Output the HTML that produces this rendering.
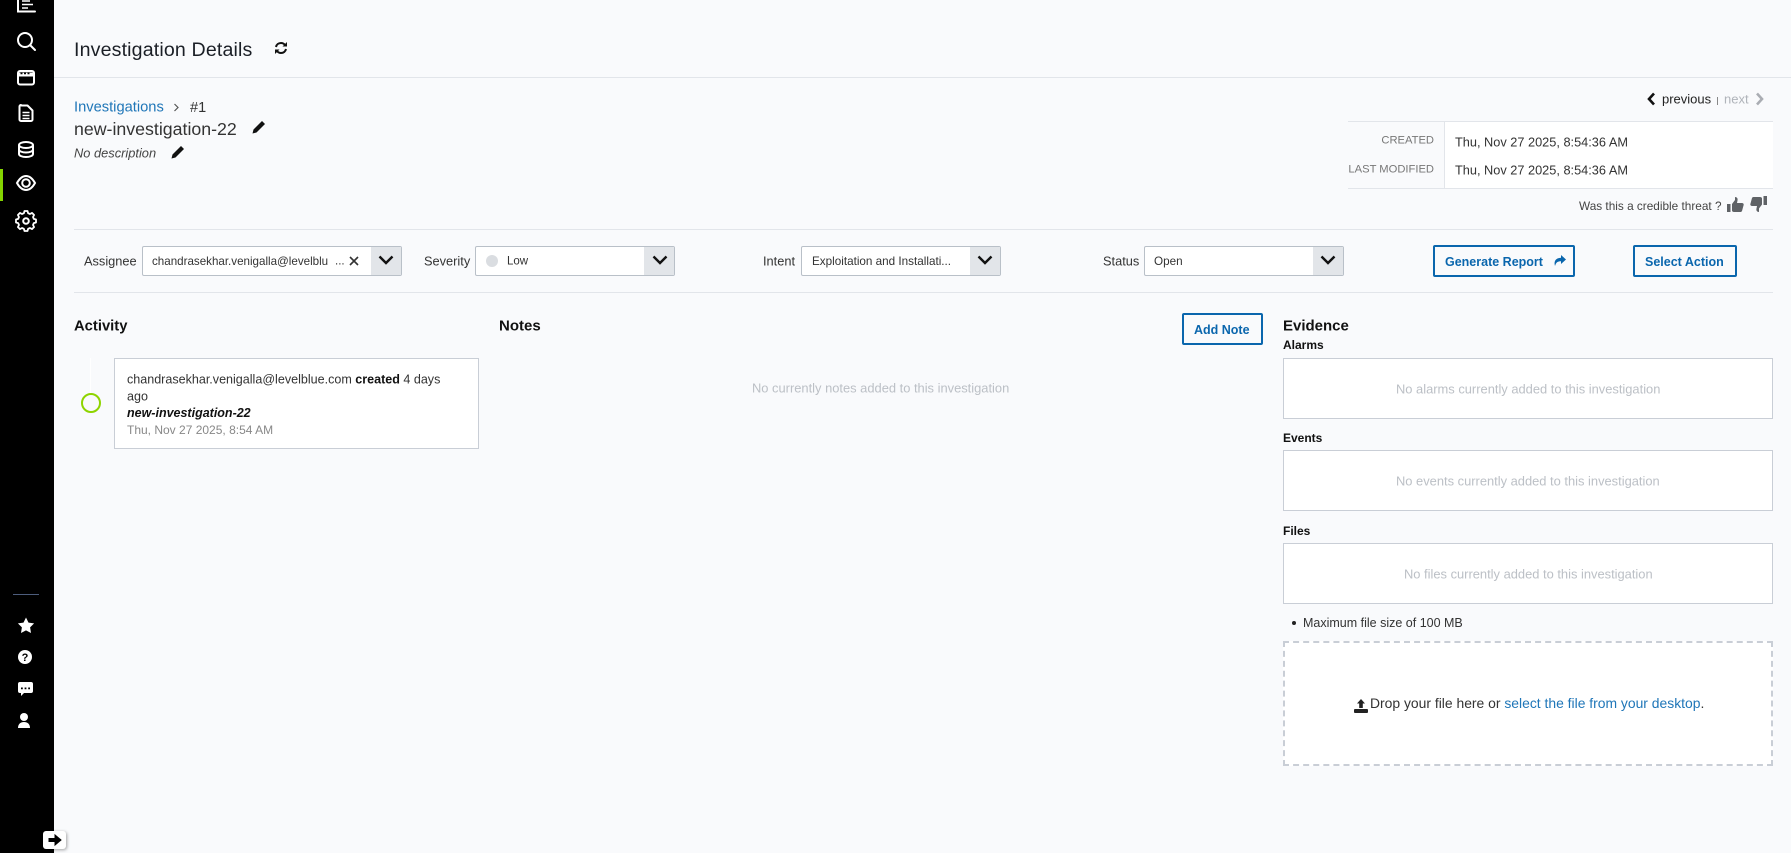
<!DOCTYPE html>
<html lang="en"><head><meta charset="utf-8"><title>Investigation Details</title>
<style>
html,body{margin:0;padding:0;width:1791px;height:853px;overflow:hidden;background:#f9fafc;font-family:"Liberation Sans",sans-serif;color:#222}
#app{position:relative;width:1791px;height:853px;overflow:hidden}
.t{position:absolute;white-space:nowrap;line-height:1;transform:translateY(-50%)}
.b{position:absolute;box-sizing:border-box}
svg{position:absolute;display:block}
.hr{position:absolute;height:1px;background:#e2e5ea}
.box{position:absolute;box-sizing:border-box;background:#fff;border:1px solid #c9ced6}
.sel{position:absolute;box-sizing:border-box;background:#fff;border:1px solid #b9c0c8;border-radius:2px;top:246px;height:30px}
.sel i{position:absolute;right:0;top:0;bottom:0;width:30px;background:#e2e5e9}
.btn{position:absolute;box-sizing:border-box;border:2px solid #0a66ad;border-radius:2px;color:#0a66ad;font-weight:bold;font-size:12.5px;background:#f9fafc}
.ph{color:#bcc0c6;font-size:12.9px}
.lb{font-size:12.8px;color:#333}
a{color:#1f76b8;text-decoration:none}
</style></head><body><div id="app">

<div class="b" style="left:0;top:0;width:54px;height:853px;background:#000"></div>
<div class="b" style="left:0;top:169px;width:3px;height:32px;background:#84d400"></div>
<svg style="left:0;top:0" width="54" height="240" viewBox="0 0 54 240" fill="none" stroke="#fff" stroke-width="2">
<path d="M18 0V11.500H35" stroke-linecap="round"/><path d="M22 1H30M22 4.500H33M22 8H28" stroke-width="1.600"/>
<circle cx="25" cy="40" r="7"/><path d="M30.500 45.500L35 50" stroke-linecap="round"/>
<rect x="18" y="71" width="16" height="13.500" rx="2"/><path d="M18 74.500H34" stroke-width="4"/><path d="M20.500 73.500H22.500M24 73.500H26M27.500 73.500H29.500" stroke="#000" stroke-width="1.400"/>
<path d="M21 105.500h6.500l5 5v9a1.500 1.500 0 0 1-1.500 1.500H21a1.500 1.500 0 0 1-1.500-1.500v-13a1.500 1.500 0 0 1 1.500-1.500z" stroke-linejoin="round"/><path d="M22.500 112.500H29.500M22.500 115.500H29.500M22.500 118.500H29.500" stroke-width="1.400"/>
<ellipse cx="26" cy="145" rx="7" ry="3"/><path d="M19 145V154c0 1.700 3.100 3 7 3s7-1.300 7-3V145M19 149.500c0 1.700 3.100 3 7 3s7-1.300 7-3"/>
<path d="M17 183c2.500-4.500 5.500-7 9-7s6.500 2.500 9 7c-2.500 4.500-5.500 7-9 7s-6.500-2.500-9-7z"/><circle cx="26" cy="183" r="3.800"/>
<circle cx="26" cy="221" r="2.800"/><path d="M24.500 213.500h3l.6 2.200 1.900.8 2-1.100 2.100 2.100-1.100 2 .8 1.900 2.200.6v3l-2.200.6-.8 1.900 1.100 2-2.100 2.100-2-1.100-1.900.8-.6 2.200h-3l-.6-2.200-1.900-.8-2 1.100-2.100-2.100 1.100-2-.8-1.900-2.200-.6v-3l2.200-.6.8-1.900-1.100-2 2.100-2.100 2 1.100 1.900-.8z" stroke-linejoin="round" stroke-width="1.800" transform="translate(0 -2.500)"/>
</svg>
<div class="b" style="left:13px;top:594px;width:26px;height:1px;background:#4d5d7c"></div>
<svg style="left:0;top:610px" width="54" height="125" viewBox="0 610 54 125" fill="#fff">
<path d="M26 617.500l2.500 5.100 5.600.8-4 4 .9 5.600-5-2.600-5 2.600.9-5.600-4-4 5.600-.8z"/>
<circle cx="25" cy="657" r="7"/><text x="25" y="661" font-family="Liberation Sans" font-size="11" font-weight="bold" text-anchor="middle" fill="#000">?</text>
<path d="M20 682h11a2 2 0 0 1 2 2v7a2 2 0 0 1-2 2h-7l-3 3v-3h-1a2 2 0 0 1-2-2v-7a2 2 0 0 1 2-2z"/><path d="M21 687.500h1.800v1.800H21zM24.600 687.500h1.800v1.800h-1.800zM28.200 687.500H30v1.800h-1.800z" fill="#000"/>
<circle cx="24" cy="717" r="4"/><path d="M18 728c0-4 2.500-6 6-6s6 2 6 6z"/>
</svg>
<div class="b" style="left:43px;top:831px;width:23px;height:18px;background:#fff;border-radius:3px;box-shadow:1px 1px 3px rgba(0,0,0,.35)"></div>
<svg style="left:43px;top:831px" width="23" height="18" viewBox="0 0 23 18"><path d="M6 7.500H12V4L18 9L12 14V10.500H6z" fill="#000" stroke="#000"/></svg>

<div class="t" style="left:74px;top:50.500px;font-size:19.600px;letter-spacing:.15px;color:#1b1f26">Investigation Details</div>
<svg style="left:274px;top:41px" width="14" height="14" viewBox="0 0 14 14" fill="none" stroke="#111" stroke-width="2"><path d="M2 6C2.500 3.500 4.500 2 7 2c1.600 0 3 .7 4 2"/><path d="M12 8c-.5 2.500-2.500 4-5 4-1.600 0-3-.7-4-2"/><path d="M13 1v4.500H8.500z" fill="#111" stroke="none"/><path d="M1 13V8.500h4.500z" fill="#111" stroke="none"/></svg>
<div class="hr" style="left:54px;top:77px;width:1737px"></div>

<a class="t" style="left:74px;top:107.500px;font-size:14.700px">Investigations</a>
<svg style="left:173px;top:103px" width="7" height="9" viewBox="0 0 7 9" fill="none" stroke="#555" stroke-width="1.200"><path d="M1.500 1L5 4.500 1.500 8"/></svg>
<div class="t" style="left:190px;top:107.500px;font-size:14.500px;color:#333">#1</div>
<div class="t" style="left:74px;top:130px;font-size:17.750px;color:#333">new-investigation-22</div>
<svg style="left:252px;top:120px" width="14" height="14" viewBox="0 0 14 14" fill="#111"><path d="M10 1l3 3-8.500 8.500-4 1 1-4z"/></svg>
<div class="t" style="left:74px;top:154px;font-size:12.850px;font-style:italic;color:#444">No description</div>
<svg style="left:171px;top:145px" width="14" height="14" viewBox="0 0 14 14" fill="#111"><path d="M10 1l3 3-8.500 8.500-4 1 1-4z"/></svg>

<svg style="left:1646px;top:92px" width="10" height="14" viewBox="0 0 10 14" fill="none" stroke="#111" stroke-width="2.600"><path d="M8 1.500L3 7l5 5.500"/></svg>
<div class="t" style="left:1662px;top:99px;font-size:13px;color:#222">previous</div>
<div class="b" style="left:1717px;top:97px;width:1px;height:8px;background:#888"></div>
<div class="t" style="left:1724px;top:99px;font-size:13px;color:#b0b4ba">next</div>
<svg style="left:1755px;top:92px" width="10" height="14" viewBox="0 0 10 14" fill="none" stroke="#aaadb3" stroke-width="2.600"><path d="M2 1.500L7 7l-5 5.500"/></svg>

<div class="b" style="left:1445px;top:122px;width:328px;height:66px;background:#fff"></div>
<div class="hr" style="left:1348px;top:121px;width:425px"></div>
<div class="hr" style="left:1348px;top:188px;width:425px"></div>
<div class="b" style="left:1444px;top:122px;width:1px;height:66px;background:#e2e5ea"></div>
<div class="t" style="right:357px;top:141px;font-size:11.200px;color:#777">CREATED</div>
<div class="t" style="right:357px;top:170px;font-size:11.200px;color:#777">LAST MODIFIED</div>
<div class="t" style="left:1455px;top:142.500px;font-size:12.750px;color:#333">Thu, Nov 27 2025, 8:54:36 AM</div>
<div class="t" style="left:1455px;top:170.500px;font-size:12.750px;color:#333">Thu, Nov 27 2025, 8:54:36 AM</div>
<div class="t" style="left:1579px;top:207px;font-size:11.800px;color:#444">Was this a credible threat ?</div>
<svg style="left:1727px;top:197px" width="17" height="16" viewBox="0 0 17 16" fill="#5f6266"><path d="M0 7h3.500v8H0zM5 7l3-4V0c2 0 3 1.500 2.500 3.500L10 6h5c1.500 0 2 1.500 1.500 2.500L15 14c-.3.800-1 1-2 1H7c-1 0-2-.5-2-1.500z"/></svg>
<svg style="left:1750px;top:196px" width="17" height="16" viewBox="0 0 17 16" fill="#5f6266"><path d="M17 9h-3.500V0H17zM12 8.500l-3 4V16c-2 0-3-1.500-2.500-3.500L7 10H2C.5 10 0 8.500.5 7.500L2 2c.3-.8 1-1 2-1h6c1 0 2 .5 2 1.500z"/></svg>
<div class="hr" style="left:74px;top:229px;width:1699px"></div>

<div class="t lb" style="left:84px;top:262px">Assignee</div>
<div class="sel" style="left:142px;width:260px"><i></i></div>
<div class="t" style="left:152px;top:262px;font-size:11.600px;color:#333">chandrasekhar.venigalla@levelblu</div>
<div class="t" style="left:335px;top:262px;font-size:11.500px;color:#333">...</div>
<svg style="left:349px;top:256px" width="10" height="10" viewBox="0 0 10 10" stroke="#333" stroke-width="1.600"><path d="M1 1l8 8M9 1l-8 8"/></svg>
<svg style="left:378px;top:254px" width="16" height="12" viewBox="0 0 16 12" fill="none" stroke="#111" stroke-width="2.400"><path d="M1.500 2.500L8 9l6.500-6.500"/></svg>

<div class="t lb" style="left:424px;top:262px">Severity</div>
<div class="sel" style="left:475px;width:200px"><i></i></div>
<div class="b" style="left:486px;top:255px;width:12px;height:12px;border-radius:50%;background:#dadde1"></div>
<div class="t" style="left:507px;top:262px;font-size:11.500px;color:#333">Low</div>
<svg style="left:652px;top:254px" width="16" height="12" viewBox="0 0 16 12" fill="none" stroke="#111" stroke-width="2.400"><path d="M1.500 2.500L8 9l6.500-6.500"/></svg>

<div class="t lb" style="left:763px;top:262px">Intent</div>
<div class="sel" style="left:801px;width:200px"><i></i></div>
<div class="t" style="left:812px;top:262px;font-size:11.700px;color:#333">Exploitation and Installati...</div>
<svg style="left:977px;top:254px" width="16" height="12" viewBox="0 0 16 12" fill="none" stroke="#111" stroke-width="2.400"><path d="M1.500 2.500L8 9l6.500-6.500"/></svg>

<div class="t lb" style="left:1103px;top:262px">Status</div>
<div class="sel" style="left:1144px;width:200px"><i></i></div>
<div class="t" style="left:1154px;top:262px;font-size:11.700px;color:#333">Open</div>
<svg style="left:1320px;top:254px" width="16" height="12" viewBox="0 0 16 12" fill="none" stroke="#111" stroke-width="2.400"><path d="M1.500 2.500L8 9l6.500-6.500"/></svg>

<div class="btn" style="left:1433px;top:245px;width:142px;height:32px"></div>
<div class="t" style="left:1445px;top:262px;font-size:12.500px;font-weight:bold;color:#0a66ad">Generate Report</div>
<svg style="left:1553px;top:255px" width="13" height="12" viewBox="0 0 13 12" fill="#0a66ad"><path d="M8 0l5 4.500L8 9V6.200C5 6.200 3 7 2 11 .5 6 3 3 8 2.800z"/></svg>
<div class="btn" style="left:1633px;top:245px;width:104px;height:32px"></div>
<div class="t" style="left:1645px;top:262px;font-size:12.500px;font-weight:bold;color:#0a66ad">Select Action</div>
<div class="hr" style="left:74px;top:292px;width:1699px"></div>

<div class="t" style="left:74px;top:327px;font-size:14.800px;font-weight:bold;color:#111">Activity</div>
<div class="b" style="left:90px;top:358px;width:1px;height:36px;background:#fff"></div>
<div class="b" style="left:81px;top:393px;width:20px;height:20px;border-radius:50%;border:2.500px solid #8ed400;background:#f9fafc"></div>
<div class="box" style="left:114px;top:358px;width:365px;height:91px"></div>
<div class="t" style="left:127px;top:379.500px;font-size:12.550px;color:#333">chandrasekhar.venigalla@levelblue.com <b style="color:#111">created</b> 4 days</div>
<div class="t" style="left:127px;top:396.500px;font-size:12.550px;color:#333">ago</div>
<div class="t" style="left:127px;top:413px;font-size:12.500px;font-weight:bold;font-style:italic;color:#111">new-investigation-22</div>
<div class="t" style="left:127px;top:430px;font-size:12px;color:#888">Thu, Nov 27 2025, 8:54 AM</div>

<div class="t" style="left:499px;top:326px;font-size:15px;font-weight:bold;color:#111">Notes</div>
<div class="btn" style="left:1182px;top:313px;width:81px;height:32px"></div>
<div class="t" style="left:1194px;top:330px;font-size:12.500px;font-weight:bold;color:#0a66ad">Add Note</div>
<div class="t ph" style="left:752px;top:388.500px">No currently notes added to this investigation</div>

<div class="t" style="left:1283px;top:326px;font-size:15px;font-weight:bold;color:#111">Evidence</div>
<div class="t" style="left:1283px;top:345px;font-size:12px;font-weight:bold;color:#111">Alarms</div>
<div class="box" style="left:1283px;top:358px;width:490px;height:61px"></div>
<div class="t ph" style="left:1396px;top:389.500px">No alarms currently added to this investigation</div>
<div class="t" style="left:1283px;top:438px;font-size:12px;font-weight:bold;color:#111">Events</div>
<div class="box" style="left:1283px;top:450px;width:490px;height:61px"></div>
<div class="t ph" style="left:1396px;top:482px">No events currently added to this investigation</div>
<div class="t" style="left:1283px;top:531px;font-size:12px;font-weight:bold;color:#111">Files</div>
<div class="box" style="left:1283px;top:543px;width:490px;height:61px"></div>
<div class="t ph" style="left:1404px;top:574.500px">No files currently added to this investigation</div>
<div class="b" style="left:1292px;top:621px;width:4px;height:4px;border-radius:50%;background:#222"></div>
<div class="t" style="left:1303px;top:623px;font-size:12.500px;color:#333">Maximum file size of 100 MB</div>
<div class="b" style="left:1283px;top:641px;width:490px;height:125px;background:#fff;border:2px dashed #c9ced6"></div>
<svg style="left:1354px;top:699px" width="14" height="14" viewBox="0 0 14 14" fill="#222"><path d="M7 0l4 4.500H8.800V9H5.200V4.500H3z"/><rect x="0" y="10" width="14" height="4" rx="1"/></svg>
<div class="t" style="left:1370px;top:703.500px;font-size:13.900px;color:#333">Drop your file here or <a>select the file from your desktop</a>.</div>

</div></body></html>
